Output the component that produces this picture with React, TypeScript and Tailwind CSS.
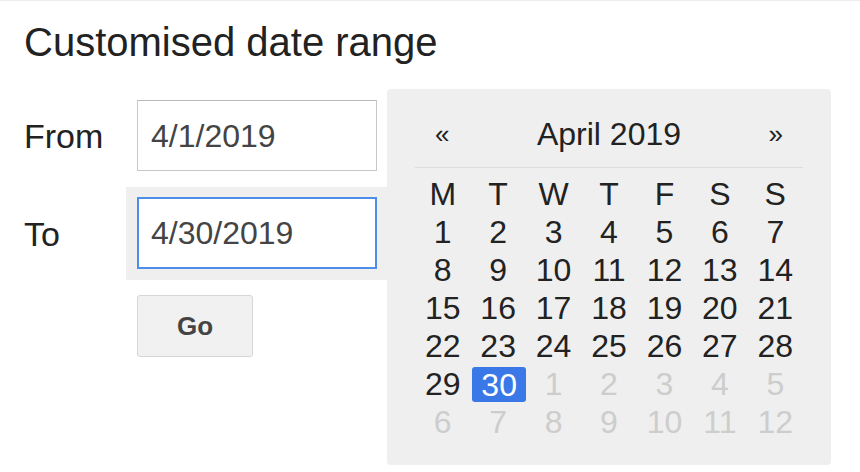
const weekdays = ["M", "T", "W", "T", "F", "S", "S"];

type Day = { n: number; muted?: boolean; selected?: boolean };

function buildDays(): Day[] {
	const days: Day[] = [];
	for (let i = 1; i <= 30; i++) days.push({ n: i, selected: i === 30 });
	for (let i = 1; i <= 12; i++) days.push({ n: i, muted: true });
	return days;
}

function Calendar() {
	const days = buildDays();
	return (
		<div className="w-[444px] h-[376px] shrink-0 rounded-[4px] bg-[#efefef] pt-[26px] text-[32px] text-[#222]">
			<div className="mx-[28px] flex items-center justify-between border-b border-[#dcdcdc] px-[20px] pb-[14px] leading-[38px]">
				<span className="text-[26px]">«</span>
				<span>April 2019</span>
				<span className="text-[26px]">»</span>
			</div>
			<div className="mx-[28px] mt-[7px] grid grid-cols-7 text-center leading-[38px]">
				{weekdays.map((d, i) => (
					<div key={"w" + i} className="h-[38px]">
						{d}
					</div>
				))}
				{days.map((d, i) => (
					<div key={i} className="flex h-[38px] items-center justify-center">
						{d.selected ? (
							<span className="ml-[2px] mt-[1px] flex h-[35px] w-[56px] items-center justify-center rounded-[3px] bg-[#3b78e7] text-white">
								{d.n}
							</span>
						) : (
							<span className={d.muted ? "text-[#cdcdcd]" : ""}>{d.n}</span>
						)}
					</div>
				))}
			</div>
		</div>
	);
}

export default function App() {
	return (
		<div className="h-[472px] w-[860px] overflow-hidden border-t border-[#ececec] bg-white font-['Liberation_Sans',Arial,sans-serif] text-[#222]">
			<div className="h-[88px] pl-[24px] pt-[18px] text-[40px] leading-[46px]">
				Customised date range
			</div>
			<div className="flex items-start">
				<div className="flex w-[387px] shrink-0 flex-col">
					<div className="mt-[11px] flex items-center">
						<label className="w-[137px] pl-[24px] text-[34px] leading-[38px]">From</label>
						<div className="flex h-[71px] w-[240px] items-center border border-[#c8c8c8] border-t-[#b9b9b9] bg-white pl-[13px] text-[32px] text-[#444]">
							4/1/2019
						</div>
					</div>
					<div className="mt-[16px] flex items-center">
						<label className="w-[126px] pl-[24px] text-[34px] leading-[38px]">To</label>
						<div className="flex-1 bg-[#efefef] pb-[11px] pl-[11px] pr-[10px] pt-[10px]">
							<div className="flex h-[72px] w-[240px] items-center border-2 border-[#4d8ee9] bg-white pl-[12px] text-[32px] text-[#444]">
								4/30/2019
							</div>
						</div>
					</div>
					<div className="mt-[15px] pl-[137px]">
						<button className="h-[62px] w-[116px] rounded-[3px] border border-[#d6d6d6] bg-[#f1f1f1] text-[26px] font-bold text-[#444]">
							Go
						</button>
					</div>
				</div>
				<Calendar />
			</div>
		</div>
	);
}
